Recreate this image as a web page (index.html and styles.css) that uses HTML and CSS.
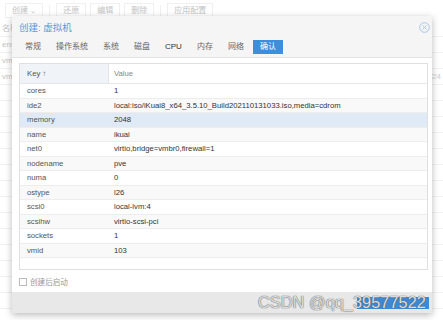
FILE: index.html
```html
<!DOCTYPE html>
<html lang="zh">
  <head>
    <meta charset="utf-8">
    <title>创建: 虚拟机</title>
    <link rel="stylesheet" href="styles.css">
  </head>
  <body>
    <!-- page behind the modal -->
    <div class="page">
      <div class="toolbar">
        <span class="tb-btn">创建 <span class="caret">&#8964;</span></span>
        <span class="tb-sep"></span>
        <span class="tb-btn">还原</span>
        <span class="tb-btn">编辑</span>
        <span class="tb-btn">删除</span>
        <span class="tb-sep"></span>
        <span class="tb-btn">应用配置</span>
      </div>
      <div class="bg-list">
        <div class="bg-row">名称<span class="bg-right"></span></div>
        <div class="bg-row">ens18<span class="bg-right"></span></div>
        <div class="bg-row">vmbr0<span class="bg-right"></span></div>
        <div class="bg-row">vmbr1<span class="bg-right">/24</span></div>
        <div class="bg-row"></div>
        <div class="bg-row"></div>
        <div class="bg-row"></div>
        <div class="bg-row"></div>
        <div class="bg-row"></div>
        <div class="bg-row"></div>
        <div class="bg-row"></div>
        <div class="bg-row"></div>
        <div class="bg-row"></div>
        <div class="bg-row"></div>
        <div class="bg-row"></div>
        <div class="bg-row"></div>
        <div class="bg-row"></div>
        <div class="bg-row"></div>
      </div>
    </div>

    <!-- the wizard window -->
    <div class="dialog">
      <div class="dlg-head">
        <div class="dlg-title">
          <span>创建: 虚拟机</span>
          <svg class="dlg-close" width="11" height="11" viewBox="0 0 11 11">
            <circle cx="5.5" cy="5.5" r="4.8" fill="none" stroke="#a9c6e6" stroke-width="1"/>
            <path d="M3.6 3.6 L7.4 7.4 M7.4 3.6 L3.6 7.4" stroke="#a9c6e6" stroke-width="1"/>
          </svg>
        </div>
        <div class="tabs">
          <span class="tab">常规</span>
          <span class="tab">操作系统</span>
          <span class="tab">系统</span>
          <span class="tab">磁盘</span>
          <span class="tab tab-dark">CPU</span>
          <span class="tab">内存</span>
          <span class="tab">网络</span>
          <span class="tab tab-active">确认</span>
        </div>
      </div>

      <div class="dlg-body">
        <div class="grid">
          <div class="grid-head">
            <div class="cell-key">Key &#8593;</div>
            <div class="cell-val">Value</div>
          </div>
          <div class="row"><div class="cell-key">cores</div><div class="cell-val">1</div></div>
          <div class="row alt"><div class="cell-key">ide2</div><div class="cell-val">local:iso/iKuai8_x64_3.5.10_Build202110131033.iso,media=cdrom</div></div>
          <div class="row selected"><div class="cell-key">memory</div><div class="cell-val">2048</div></div>
          <div class="row alt"><div class="cell-key">name</div><div class="cell-val">ikuai</div></div>
          <div class="row"><div class="cell-key">net0</div><div class="cell-val">virtio,bridge=vmbr0,firewall=1</div></div>
          <div class="row alt"><div class="cell-key">nodename</div><div class="cell-val">pve</div></div>
          <div class="row"><div class="cell-key">numa</div><div class="cell-val">0</div></div>
          <div class="row alt"><div class="cell-key">ostype</div><div class="cell-val">l26</div></div>
          <div class="row"><div class="cell-key">scsi0</div><div class="cell-val">local-lvm:4</div></div>
          <div class="row alt"><div class="cell-key">scsihw</div><div class="cell-val">virtio-scsi-pci</div></div>
          <div class="row"><div class="cell-key">sockets</div><div class="cell-val">1</div></div>
          <div class="row alt"><div class="cell-key">vmid</div><div class="cell-val">103</div></div>
        </div>
        <label class="start-after">
          <span class="checkbox"></span>
          <span>创建后启动</span>
        </label>
      </div>

      <div class="dlg-foot">
        <span class="btn-finish"></span>
      </div>
    </div>

    <div class="watermark">CSDN @qq_39577522</div>
  </body>
</html>
```

FILE: styles.css
```css
body {
  margin: 0;
  width: 443px;
  height: 320px;
  overflow: hidden;
  background: #ffffff;
  font-family: "Liberation Sans", "Noto Sans CJK SC", sans-serif;
  color: #333;
  position: relative;
}

/* background page, faded by the modal */
.page {
  color: #c4c4c4;
  font-size: 8px;
}

.toolbar {
  display: flex;
  align-items: center;
  gap: 4px;
  height: 21px;
  padding: 0 5px;
}

.tb-btn {
  border: 1px solid #f0f0f0;
  padding: 2px 6px;
  line-height: 9px;
}

.caret {
  font-size: 7px;
}

.tb-sep {
  width: 1px;
  height: 12px;
  background: #f0f0f0;
  margin: 0 2px;
}

.bg-row {
  display: flex;
  justify-content: space-between;
  height: 16px;
  line-height: 16px;
  padding: 0 2px;
  border-bottom: 1px solid #f2f2f2;
  box-sizing: border-box;
}

.bg-right {
  color: #cfcfcf;
}

/* dialog */
.dialog {
  position: absolute;
  left: 12px;
  top: 16px;
  width: 420px;
  height: 297px;
  display: flex;
  flex-direction: column;
  background: #fff;
  box-shadow: 0 2px 7px rgba(0, 0, 0, 0.28);
}

.dlg-head {
  background: #f5f5f5;
  border-bottom: 1px solid #e2e2e2;
  height: 41px;
}

.dlg-title {
  display: flex;
  justify-content: space-between;
  align-items: center;
  height: 22px;
  padding: 0 2px 0 7px;
  color: #5a9ad8;
  font-size: 9.5px;
}

.tabs {
  display: flex;
  align-items: center;
  gap: 3px;
  padding: 2px 0 0 7px;
  font-size: 8px;
  color: #666;
}

.tab {
  padding: 3px 6px;
  line-height: 8px;
}

.tab-dark {
  color: #333;
}

.tab-active {
  background: #3f8edb;
  color: #fff;
  padding: 3px 7px;
}

.dlg-body {
  flex: 1;
  padding: 5px 4px 0 7px;
}

.grid {
  border: 1px solid #e0e0e0;
  height: 207px;
  box-sizing: border-box;
  font-size: 7.7px;
}

.grid-head {
  display: flex;
  height: 19px;
  align-items: stretch;
  border-bottom: 1px solid #e6e6e6;
  color: #888;
}

.grid-head .cell-key {
  background: #f0f3f8;
  border-right: 1px solid #e3e3e3;
}

.grid-head div {
  display: flex;
  align-items: center;
}

.row {
  display: flex;
  align-items: center;
  height: 14.5px;
  box-sizing: border-box;
  border-bottom: 1px solid #ededed;
}

.alt {
  background: #f9f9f9;
}

.selected {
  background: #e0eaf6;
}

.cell-key {
  width: 89px;
  padding-left: 7px;
  box-sizing: border-box;
  color: #555;
}

.cell-val {
  padding-left: 5px;
  white-space: nowrap;
}

.start-after {
  display: flex;
  align-items: center;
  gap: 3px;
  margin-top: 6px;
  font-size: 7.6px;
  color: #999;
}

.checkbox {
  width: 6px;
  height: 6px;
  border: 1px solid #bbb;
  background: #fff;
}

.dlg-foot {
  display: flex;
  justify-content: flex-end;
  align-items: center;
  height: 21px;
  background: #e8e8e8;
  padding: 0 3px;
}

.btn-finish {
  width: 72px;
  height: 12px;
  background: #3c8ad6;
}

.watermark {
  position: absolute;
  left: 258px;
  top: 293px;
  font-size: 16.4px;
  color: rgba(255, 255, 255, 0.8);
  text-shadow: 0 0 1px #555, 0 0 1px #666;
  white-space: nowrap;
}
```
